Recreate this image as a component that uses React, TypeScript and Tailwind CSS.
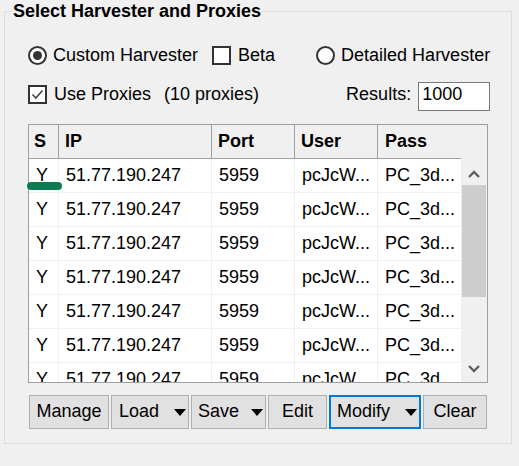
import React from "react"

const rows = Array.from({ length: 7 }, () => ({
  s: "Y",
  ip: "51.77.190.247",
  port: "5959",
  user: "pcJcW...",
  pass: "PC_3d...",
}))

function Radio({ checked }: { checked?: boolean }) {
  return (
    <span className="flex h-[19px] w-[19px] shrink-0 items-center justify-center rounded-full border-2 border-[#333333] bg-white">
      {checked && <span className="h-[9px] w-[9px] rounded-full bg-[#333333]" />}
    </span>
  )
}

function Check({ checked }: { checked?: boolean }) {
  return (
    <span className="flex h-[19px] w-[19px] shrink-0 items-center justify-center border-2 border-[#333333] bg-white">
      {checked && (
        <svg width="13" height="11" viewBox="0 0 13 11">
          <path d="M1.5 5.5 L4.8 9 L11.5 1.5" fill="none" stroke="#444" strokeWidth="1.6" />
        </svg>
      )}
    </span>
  )
}

function Caret() {
  return (
    <svg width="12" height="7" viewBox="0 0 12 7" className="ml-auto mr-[2px] mt-[3px] shrink-0">
      <polygon points="0,0 12,0 6,7" fill="#000" />
    </svg>
  )
}

function Chevron({ up }: { up?: boolean }) {
  return (
    <svg width="12" height="8" viewBox="0 0 12 8">
      <path
        d={up ? "M1 7 L6 2 L11 7" : "M1 1 L6 6 L11 1"}
        fill="none"
        stroke="#606060"
        strokeWidth="2.4"
      />
    </svg>
  )
}

export default function App() {
  return (
    <div className="h-[466px] w-[519px] overflow-hidden whitespace-nowrap bg-[#f0f0f0] font-['Liberation_Sans',Arial,sans-serif] text-[18px] text-black">
      <fieldset className="ml-[4px] mt-[1px] w-[507px] border border-[#dcdcdc] pb-[14px] pl-[23px] pr-[21px]">
        <legend className="ml-[-16px] px-[1px] text-[18px] font-bold leading-[21px]">
          Select Harvester and Proxies
        </legend>

        {/* harvester choice */}
        <div className="mt-[24px] flex h-[19px] items-center leading-[19px]">
          <Radio checked />
          <span className="ml-[6px] shrink-0">Custom Harvester</span>
          <span className="ml-[14px] shrink-0">
            <Check />
          </span>
          <span className="ml-[7px] shrink-0">Beta</span>
          <span className="ml-[41px] shrink-0">
            <Radio />
          </span>
          <span className="ml-[6px] shrink-0">Detailed Harvester</span>
        </div>

        {/* proxies / results */}
        <div className="mt-[17px] flex h-[29px] items-center leading-[19px]">
          <span className="mb-[4px]">
            <Check checked />
          </span>
          <span className="mb-[5px] ml-[7px]">Use Proxies</span>
          <span className="mb-[5px] ml-[13px]">(10 proxies)</span>
          <span className="mb-[5px] ml-auto">Results:</span>
          <input
            readOnly
            value="1000"
            className="ml-[7px] h-[29px] w-[72px] border border-[#7a7a7a] bg-white pb-[5px] pl-[3px] text-[18px] outline-none"
          />
        </div>

        {/* proxy table */}
        <div className="relative mt-[13px] h-[259px] w-[460px] border border-[#a0a0a0] bg-white">
          <div className="flex h-[34px] bg-[#f0f0f0] font-bold leading-[21px]">
            <div className="flex w-[30px] items-center border-b border-r border-[#a0a0a0] pl-[5px]">S</div>
            <div className="flex w-[153px] items-center border-b border-r border-[#a0a0a0] pl-[6px]">IP</div>
            <div className="flex w-[83px] items-center border-b border-r border-[#a0a0a0] pl-[6px]">Port</div>
            <div className="flex w-[83px] items-center border-b border-r border-[#a0a0a0] pl-[6px]">User</div>
            <div className="flex w-[83px] items-center border-b border-[#a0a0a0] pl-[7px]">Pass</div>
            <div className="flex-1" />
          </div>

          <div className="flex h-[223px]">
            <div className="w-[432px] overflow-hidden leading-[21px]">
              {rows.map((r, i) => (
                <div key={i} className="flex h-[34px] border-b border-[#f0f0f0]">
                  <div className="flex w-[30px] items-center border-r border-[#f0f0f0] pl-[7px]">{r.s}</div>
                  <div className="flex w-[153px] items-center border-r border-[#f0f0f0] pl-[7px]">{r.ip}</div>
                  <div className="flex w-[83px] items-center border-r border-[#f0f0f0] pl-[7px]">{r.port}</div>
                  <div className="flex w-[83px] items-center border-r border-[#f0f0f0] pl-[7px]">{r.user}</div>
                  <div className="flex w-[83px] items-center pl-[7px]">{r.pass}</div>
                </div>
              ))}
            </div>
            <div className="flex w-[26px] flex-col bg-[#f0f0f0]">
              <div className="flex h-[26px] items-center justify-center pt-[3px]">
                <Chevron up />
              </div>
              <div className="mx-[1px] h-[112px] bg-[#cdcdcd]" />
              <div className="flex-1" />
              <div className="flex h-[26px] items-center justify-center">
                <Chevron />
              </div>
            </div>
          </div>

          {/* selection marker */}
          <div className="absolute left-[-2px] top-[57px] h-[8px] w-[35px] rounded-full bg-[#0b7c4f]" />
        </div>

        {/* actions */}
        <div className="ml-[1px] mt-[12px] flex gap-[2px] leading-[21px]">
          <button className="flex h-[34px] w-[80px] items-center justify-center border border-[#adadad] bg-[#e1e1e1] pb-[2px]">
            Manage
          </button>
          <button className="flex h-[34px] w-[78px] items-center border border-[#adadad] bg-[#e1e1e1] pb-[2px] pl-[7px]">
            Load
            <Caret />
          </button>
          <button className="flex h-[34px] w-[75px] items-center border border-[#adadad] bg-[#e1e1e1] pb-[2px] pl-[6px]">
            Save
            <Caret />
          </button>
          <button className="flex h-[34px] w-[59px] items-center justify-center border border-[#adadad] bg-[#e1e1e1] pb-[2px]">
            Edit
          </button>
          <button className="flex h-[34px] w-[92px] items-center border-2 border-[#0078d7] bg-[#e1e1e1] pb-[2px] pl-[6px]">
            Modify
            <Caret />
          </button>
          <button className="flex h-[34px] w-[64px] items-center justify-center border border-[#adadad] bg-[#e1e1e1] pb-[2px]">
            Clear
          </button>
        </div>
      </fieldset>
    </div>
  )
}
